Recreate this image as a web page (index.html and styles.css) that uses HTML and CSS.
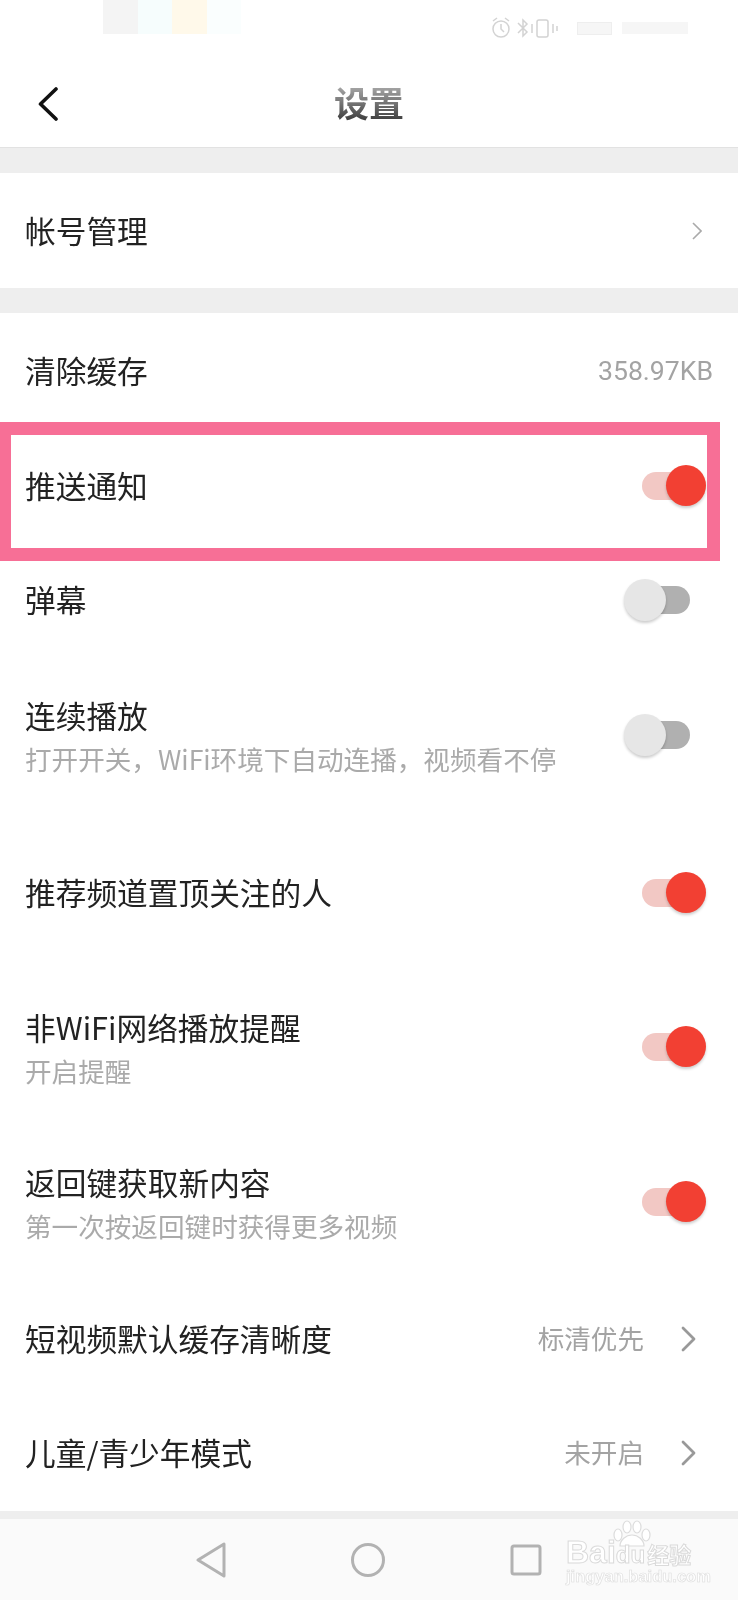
FILE: index.html
```html
<!DOCTYPE html>
<html lang="zh-CN">

<head>
    <meta charset="UTF-8">
    <meta name="viewport" content="width=device-width, initial-scale=1.0">
    <title>设置</title>
    <link rel="stylesheet" href="styles.css">
</head>

<body>
    <div class="page">
        <!-- 状态栏 -->
        <div class="status">
            <div class="swatches">
                <span class="swatch swatch-grey"></span>
                <span class="swatch swatch-cyan"></span>
                <span class="swatch swatch-yellow"></span>
                <span class="swatch swatch-pale"></span>
            </div>
            <div class="status-icons">
                <svg width="76" height="22" viewBox="0 0 76 22" fill="none" stroke="#c4c4c4" stroke-width="1.5">
                    <circle cx="10" cy="12" r="8" />
                    <path d="M10 7v5l3 3M2 4l4-3M18 4l-4-3" />
                    <path d="M27 6l9 9-4 4V3l4 4-9 9" />
                    <rect x="46" y="3" width="11" height="17" rx="2" />
                    <path d="M41 7v9M62 7v9M66 9v5" />
                </svg>
                <span class="status-battery"></span>
                <span class="status-time"></span>
            </div>
        </div>

        <!-- 标题栏 -->
        <header class="bar">
            <svg class="back" width="20" height="34" viewBox="0 0 20 34" fill="none" stroke="#111" stroke-width="3.6" stroke-linecap="round" stroke-linejoin="round">
                <path d="M18 2L2.5 17 18 32" />
            </svg>
            <h1 class="bar-title">设置</h1>
        </header>

        <div class="gap"></div>

        <section class="row row-account">
            <span class="label">帐号管理</span>
            <svg class="arrow-small" width="10" height="18" viewBox="0 0 10 18" fill="none" stroke="#aaa" stroke-width="1.6">
                <path d="M1 1l8 8-8 8" />
            </svg>
        </section>

        <div class="gap"></div>

        <section class="row row-115">
            <span class="label">清除缓存</span>
            <span class="value value-cache">358.97KB</span>
        </section>

        <section class="row row-115">
            <span class="label">推送通知</span>
            <span class="toggle on"><i class="track"></i><i class="knob"></i></span>
        </section>

        <section class="row row-114">
            <span class="label">弹幕</span>
            <span class="toggle"><i class="track"></i><i class="knob"></i></span>
        </section>

        <section class="row row-continue">
            <div class="text">
                <div class="label">连续播放</div>
                <div class="sub">打开开关，WiFi环境下自动连播，视频看不停</div>
            </div>
            <span class="toggle"><i class="track"></i><i class="knob"></i></span>
        </section>

        <section class="row row-top">
            <span class="label">推荐频道置顶关注的人</span>
            <span class="toggle on"><i class="track"></i><i class="knob"></i></span>
        </section>

        <section class="row row-wifi">
            <div class="text">
                <div class="label">非WiFi网络播放提醒</div>
                <div class="sub">开启提醒</div>
            </div>
            <span class="toggle on"><i class="track"></i><i class="knob"></i></span>
        </section>

        <section class="row row-return">
            <div class="text">
                <div class="label">返回键获取新内容</div>
                <div class="sub">第一次按返回键时获得更多视频</div>
            </div>
            <span class="toggle on"><i class="track"></i><i class="knob"></i></span>
        </section>

        <section class="row row-112">
            <span class="label">短视频默认缓存清晰度</span>
            <span class="value">标清优先</span>
            <svg class="arrow" width="15" height="26" viewBox="0 0 15 26" fill="none" stroke="#999" stroke-width="2.8" stroke-linecap="round" stroke-linejoin="round">
                <path d="M2 2l11 11L2 24" />
            </svg>
        </section>

        <section class="row row-116">
            <span class="label">儿童/青少年模式</span>
            <span class="value">未开启</span>
            <svg class="arrow" width="15" height="26" viewBox="0 0 15 26" fill="none" stroke="#999" stroke-width="2.8" stroke-linecap="round" stroke-linejoin="round">
                <path d="M2 2l11 11L2 24" />
            </svg>
        </section>

        <div class="gap-thin"></div>

        <!-- 底部导航 -->
        <nav class="nav">
            <svg width="30" height="36" viewBox="0 0 30 36" fill="none" stroke="#b2b2b2" stroke-width="3" stroke-linejoin="round">
                <path d="M28 2v32L2 18z" />
            </svg>
            <svg width="36" height="36" viewBox="0 0 36 36" fill="none" stroke="#b2b2b2" stroke-width="3">
                <circle cx="18" cy="18" r="15.5" />
            </svg>
            <svg width="32" height="32" viewBox="0 0 32 32" fill="none" stroke="#b2b2b2" stroke-width="3" stroke-linejoin="round">
                <rect x="2" y="2" width="28" height="28" rx="2" />
            </svg>
        </nav>

        <!-- 红框标注 -->
        <div class="mark"></div>

        <!-- 水印 -->
        <div class="stamp">
            <svg class="stamp-paw" width="40" height="28" viewBox="0 0 40 28" fill="#fff" stroke="#dcdcdc" stroke-width="1.2">
                <ellipse cx="6" cy="15" rx="4" ry="6" />
                <ellipse cx="15" cy="7" rx="4" ry="6" />
                <ellipse cx="25" cy="7" rx="4" ry="6" />
                <ellipse cx="34" cy="15" rx="4" ry="6" />
                <path d="M20 15c6 0 12 5 12 11H8c0-6 6-11 12-11z" />
            </svg>
            <div class="stamp-main"><span>Bai</span><span class="stamp-du">du</span><span class="stamp-cn">经验</span></div>
            <div class="stamp-url">jingyan.baidu.com</div>
        </div>
    </div>
</body>

</html>
```

FILE: styles.css
```css
* {
    padding: 0;
    margin: 0;
    box-sizing: border-box;
}

body {
    background-color: #fff;
    font-family: "Noto Sans CJK SC", "Noto Sans", sans-serif;
    color: #222;
}

.page {
    position: relative;
    width: 738px;
    height: 1600px;
    overflow: hidden;
    /* 原图有点糊 */
    filter: blur(0.4px);
}

/* 状态栏 */
.status {
    height: 60px;
    display: flex;
    justify-content: space-between;
    padding: 0 50px 0 103px;
}

.swatches {
    display: flex;
    height: 34px;
}

.swatch {
    width: 34.5px;
}

.swatch-grey {
    background-color: #f4f4f4;
}

.swatch-cyan {
    background-color: #f6fdfd;
}

.swatch-yellow {
    background-color: #fff9ea;
}

.swatch-pale {
    background-color: #fafefe;
}

.status-icons {
    display: flex;
    align-items: center;
    gap: 10px;
    height: 22px;
    margin-top: 17px;
    opacity: 0.75;
}

.status-battery {
    width: 35px;
    height: 13px;
    background-color: #f3f3f3;
    border: 1px solid #e8e8e8;
}

.status-time {
    width: 66px;
    height: 12px;
    background-color: #f3f3f3;
}

/* 标题栏 */
.bar {
    height: 88px;
    display: flex;
    align-items: center;
    justify-content: center;
    position: relative;
    border-bottom: 1px solid #e2e2e2;
    padding-bottom: 3px;
}

.back {
    position: absolute;
    left: 38px;
    top: 27px;
}

.bar-title {
    font-size: 35px;
    font-weight: 700;
    line-height: 44px;
    background: linear-gradient(#bbb, #333);
    -webkit-background-clip: text;
    background-clip: text;
    color: transparent;
}

.gap {
    height: 25px;
    background-color: #eee;
}

.gap-thin {
    height: 8px;
    background-color: #eee;
}

/* 列表 */
.row {
    display: flex;
    align-items: center;
    padding: 0 25px;
}

.row-account {
    height: 115px;
}

.row-115 {
    height: 115px;
}

.row-114 {
    height: 114px;
}

.row-continue {
    height: 156px;
}

.row-top {
    height: 160px;
}

.row-wifi {
    height: 148px;
}

.row-return {
    height: 162px;
}

.row-112 {
    height: 112px;
}

.row-116 {
    height: 116px;
}

.label {
    font-size: 30.7px;
    line-height: 40px;
    padding-bottom: 2px;
    color: #222;
}

.text {
    margin-top: 5px;
}

.sub {
    font-size: 26.6px;
    line-height: 44px;
    color: #aaa;
}

.value {
    margin-left: auto;
    font-size: 26.6px;
    line-height: 40px;
    padding-bottom: 2px;
    color: #a3a3a3;
}

.value-cache {
    font-family: Roboto, "Noto Sans", sans-serif;
    padding-bottom: 0;
    padding-top: 1px;
}

.arrow {
    margin-left: 37px;
    margin-right: 17px;
}

.arrow-small {
    margin-left: auto;
    margin-right: 11px;
}

/* 开关 */
.toggle {
    position: relative;
    flex: none;
    margin-left: auto;
    margin-right: 7px;
    width: 82px;
    height: 42px;
}

.track {
    position: absolute;
    left: 18px;
    top: 7px;
    width: 48px;
    height: 28px;
    border-radius: 14px;
    background-color: #b0b0b0;
}

.knob {
    position: absolute;
    left: 0;
    top: 0;
    width: 42px;
    height: 42px;
    border-radius: 50%;
    background-color: #e6e6e6;
    box-shadow: 0 2px 3px rgba(0, 0, 0, 0.2);
}

.toggle.on .track {
    background-color: #f2c8c4;
}

.toggle.on .knob {
    left: 42px;
    width: 40px;
    height: 41px;
    background-color: #f24033;
}

/* 底部导航 */
.nav {
    height: 81px;
    background-color: #fafafa;
    display: flex;
    align-items: center;
    padding-left: 196px;
    gap: 124px;
}

/* 红框标注 */
.mark {
    position: absolute;
    left: -2.5px;
    top: 422px;
    width: 722.5px;
    height: 139px;
    border: 13.5px solid #f76f96;
}

/* 水印 */
.stamp {
    position: absolute;
    left: 566px;
    top: 1520px;
    width: 134px;
    height: 64px;
}

.stamp-paw {
    position: absolute;
    left: 46px;
    top: 0;
}

.stamp-main {
    position: absolute;
    left: 0;
    top: 14px;
    display: flex;
    align-items: baseline;
    white-space: nowrap;
    font-family: "Liberation Sans", sans-serif;
    font-size: 32px;
    font-weight: 700;
    line-height: 36px;
    color: #fff;
    -webkit-text-stroke: 1px #dadada;
}

.stamp-du {
    font-size: 24px;
    margin-right: 2px;
}

.stamp-cn {
    font-family: "Noto Sans CJK SC", sans-serif;
    font-size: 22px;
}

.stamp-url {
    position: absolute;
    left: 0;
    top: 47px;
    font-family: "Liberation Sans", sans-serif;
    font-size: 16.5px;
    font-weight: 700;
    line-height: 18px;
    white-space: nowrap;
    color: #fff;
    -webkit-text-stroke: 0.7px #e0e0e0;
}
```
